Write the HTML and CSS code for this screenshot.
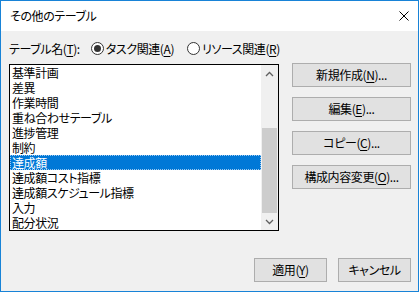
FILE: index.html
```html
<!DOCTYPE html>
<html lang="ja">
<head>
  <meta charset="UTF-8" />
  <title>その他のテーブル</title>
  <link rel="stylesheet" href="styles.css">
</head>
<body>

  <div class="window">
    <div class="titlebar">
      <span class="title">その他のテーブル</span>
      <svg class="close" width="10" height="10" viewBox="0 0 10 10">
        <path d="M0.5 0.5 L9.5 9.5 M9.5 0.5 L0.5 9.5" stroke="#000" stroke-width="1" fill="none" />
      </svg>
    </div>

    <div class="content">
      <div class="filter">
        <span class="label">テーブル名(<u>T</u>):</span>
        <label class="radio">
          <svg width="13" height="13" viewBox="0 0 13 13">
            <circle cx="6.5" cy="6.5" r="6" fill="#fff" stroke="#333" />
            <circle cx="6.5" cy="6.5" r="3.5" fill="#333" />
          </svg>
          <span>タスク関連(<u>A</u>)</span>
        </label>
        <label class="radio">
          <svg width="13" height="13" viewBox="0 0 13 13">
            <circle cx="6.5" cy="6.5" r="6" fill="#fff" stroke="#333" />
          </svg>
          <span>リソース関連(<u>R</u>)</span>
        </label>
      </div>

      <div class="main">
        <div class="listbox">
          <ul class="items">
            <li>基準計画</li>
            <li>差異</li>
            <li>作業時間</li>
            <li>重ね合わせテーブル</li>
            <li>進捗管理</li>
            <li>制約</li>
            <li class="selected">達成額</li>
            <li>達成額コスト指標</li>
            <li>達成額スケジュール指標</li>
            <li>入力</li>
            <li>配分状況</li>
          </ul>
          <div class="scrollbar">
            <div class="arrow">
              <svg width="9" height="6" viewBox="0 0 9 6">
                <path d="M1 5 L4.5 1.5 L8 5" stroke="#606060" stroke-width="1.3" fill="none" />
              </svg>
            </div>
            <div class="track">
              <div class="thumb"></div>
            </div>
            <div class="arrow">
              <svg width="9" height="6" viewBox="0 0 9 6">
                <path d="M1 1 L4.5 4.5 L8 1" stroke="#606060" stroke-width="1.3" fill="none" />
              </svg>
            </div>
          </div>
        </div>

        <div class="actions">
          <button>新規作成(<u>N</u>)...</button>
          <button>編集(<u>E</u>)...</button>
          <button>コピー(<u>C</u>)...</button>
          <button>構成内容変更(<u>O</u>)...</button>
        </div>
      </div>

      <div class="footer">
        <button class="small">適用(<u>Y</u>)</button>
        <button class="small">キャンセル</button>
      </div>
    </div>
  </div>

</body>
</html>
```

FILE: styles.css
```css
* {
  box-sizing: border-box;
}

body {
  margin: 0;
  font-family: "Noto Sans CJK JP", "Noto Sans", sans-serif;
  font-size: 12px;
  font-feature-settings: "palt";
  letter-spacing: -0.4px;
  color: #000;
}

.window {
  width: 419px;
  height: 292px;
  border: 1px solid #1883d7;
  display: flex;
  flex-direction: column;
  background-color: #f0f0f0;
}

.titlebar {
  height: 30px;
  background-color: #fff;
  display: flex;
  align-items: center;
  justify-content: space-between;
  padding: 0 9px 0 9px;
}

.title {
  line-height: 14px;
}

.close {
  display: block;
}

.content {
  flex: 1;
  display: flex;
  flex-direction: column;
  padding: 10px 7px 9px 8px;
}

.filter {
  height: 15px;
  display: flex;
  align-items: center;
  line-height: 15px;
}

.label {
  margin-right: 11px;
}

.radio {
  display: flex;
  align-items: center;
  gap: 2px;
  margin-right: 13px;
}

.radio svg {
  display: block;
}

.main {
  display: flex;
  gap: 13px;
  margin-top: 8px;
}

.listbox {
  width: 270px;
  height: 167px;
  border: 1px solid #000;
  background-color: #fff;
  display: flex;
}

.items {
  list-style: none;
  margin: 0;
  padding: 0;
  flex: 1;
}

.items li {
  height: 15px;
  line-height: 15px;
  padding-left: 2px;
  white-space: nowrap;
}

.items li.selected {
  background-color: #0078d7;
  color: #fff;
  outline: 1px dotted #9ec9f0;
  outline-offset: -1px;
}

.scrollbar {
  width: 17px;
  display: flex;
  flex-direction: column;
  background-color: #f0f0f0;
}

.arrow {
  height: 17px;
  display: flex;
  align-items: center;
  justify-content: center;
}

.arrow svg {
  display: block;
}

.track {
  flex: 1;
  padding-top: 46px;
  display: flex;
  flex-direction: column;
}

.thumb {
  flex: 1;
  margin: 0 1px;
  background-color: #cdcdcd;
}

.actions {
  display: flex;
  flex-direction: column;
  gap: 10px;
  margin-top: -1px;
}

button {
  font-family: inherit;
  font-size: 12px;
  font-feature-settings: "palt";
  letter-spacing: -0.4px;
  color: #000;
  background-color: #e1e1e1;
  border: 1px solid #adadad;
  border-radius: 0;
  padding: 0;
  height: 24px;
  line-height: 20px;
}

.actions button {
  width: 119px;
}

.footer {
  margin-top: auto;
  display: flex;
  justify-content: flex-end;
  gap: 11px;
}

.footer button.small {
  width: 73px;
}

u {
  text-decoration-thickness: 1px;
  text-underline-offset: 2px;
}
```
